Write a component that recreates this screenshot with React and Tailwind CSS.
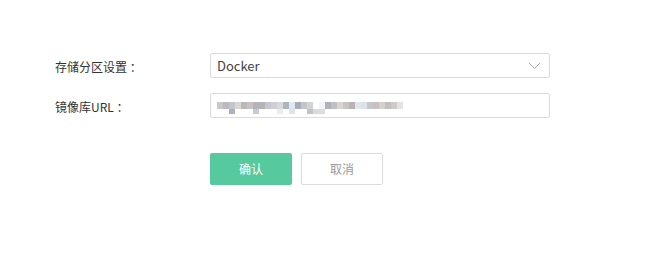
import React from "react";

const rowA = [
  "#c8c8cc", "#b9b9c0", "#c4c4cb", "#d9d6d3", "#bbb8bb", "#c9c0c0", "#b6b3b8", "#b3b3b8",
  "#c6c6cc", "#cfcfd4", "#d6d9de", "#b0b5bd", "#dfe9f5", "#a8aeb6", "#c3c5c9", "#d0d4d6",
  "#ffffff", "#f4f4f6", "#b0b2bb", "#bfbfc4", "#d8d6d2", "#c8c4c4", "#b9b3b6", "#e0e6ec",
  "#dde2e8", "#c7c7ca", "#c9c0c0", "#d4d0cf", "#c2bfc2", "#cfc9c8", "#e6e2e0",
];
const rowB = [
  "#ffffff", "#ffffff", "#a9b2c2", "#ffffff", "#ffffff", "#ffffff", "#c0cce2", "#ffffff",
  "#ffffff", "#ffffff", "#ececf0", "#ffffff", "#e4e4e4", "#ffffff", "#ffffff", "#c9c0c0",
  "#d6dce0", "#dcdce8",
];

function Mosaic() {
  return (
    <div className="flex flex-col">
      <div className="flex">
        {rowA.map((c, i) => (
          <div key={i} className="w-[6px] h-[7px]" style={{ background: c }} />
        ))}
      </div>
      <div className="flex">
        {rowB.map((c, i) => (
          <div key={i} className="w-[6px] h-[5px]" style={{ background: c }} />
        ))}
      </div>
    </div>
  );
}

export default function App() {
  return (
    <div className="w-[656px] h-[256px] bg-white pt-[53px] pl-[55px] text-[#333] font-['Microsoft_YaHei','Noto_Sans_CJK_SC',sans-serif]">
      <div className="flex items-center h-[25px]">
        <div className="w-[155px] text-[12px] pt-[2px]">存储分区设置 ：</div>
        <div className="w-[340px] h-[25px] border border-[#dcdcdc] rounded-[2px] flex items-center justify-between px-[6px]">
          <span className="text-[13px] text-[#444]">Docker</span>
          <svg width="13" height="8" viewBox="0 0 13 8" fill="none" className="mr-[2px]">
            <path d="M1 1l5.5 5.5L12 1" stroke="#aaa" strokeWidth="1" />
          </svg>
        </div>
      </div>
      <div className="flex items-center h-[25px] mt-[15px]">
        <div className="w-[155px] text-[12px] pt-[2px]">镜像库URL ：</div>
        <div className="w-[340px] h-[25px] border border-[#dcdcdc] rounded-[2px] flex items-center pl-[6px]">
          <div className="mt-[4px]">
            <Mosaic />
          </div>
        </div>
      </div>
      <div className="flex gap-[9px] mt-[35px] ml-[155px]">
        <button className="w-[82px] h-[32px] rounded-[2px] bg-[#57c99e] text-white text-[12px]">确认</button>
        <button className="w-[82px] h-[32px] rounded-[2px] border border-[#dcdcdc] bg-white text-[#999] text-[12px]">取消</button>
      </div>
    </div>
  );
}
